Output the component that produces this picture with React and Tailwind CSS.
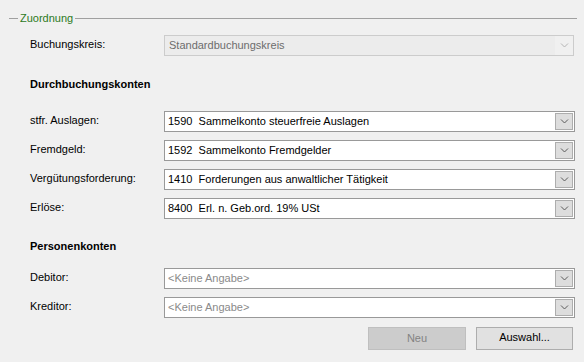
import React from 'react'

const font = { fontFamily: '"Liberation Sans", Arial, sans-serif' }

function Chevron({ color = '#5a5a5a' }) {
  return (
    <svg width="9" height="5" viewBox="0 0 9 5" className="block">
      <path d="M1 0.5 L4.5 4 L8 0.5" fill="none" stroke={color} strokeWidth="1" />
    </svg>
  )
}

function Combo({ text, placeholder, disabled }) {
  if (disabled) {
    return (
      <div className="flex h-[21px] w-[410px] border border-[#cccccc] bg-[#f0f0f0]">
        <div className="flex flex-1 items-center bg-[#ececec] pl-[4px] text-[#6d6d6d]">{text}</div>
        <div className="flex w-[18px] items-center justify-center">
          <Chevron color="#b4b4b4" />
        </div>
      </div>
    )
  }
  return (
    <div className="flex h-[21px] w-[411px] items-center border border-[#999999] bg-white pr-[1px]">
      <div className={`flex-1 whitespace-pre pl-[3px] ${placeholder ? 'text-[#8a8a8a]' : 'text-black'}`}>
        {text}
      </div>
      <div className="flex h-[17px] w-[18px] items-center justify-center border border-[#adadad] bg-[#dddddd]">
        <Chevron />
      </div>
    </div>
  )
}

function Row({ label, children, className = '' }) {
  return (
    <div className={`flex h-[21px] items-center ${className}`}>
      <div className="w-[134px] pb-[2px] pl-[30px] box-content text-black">{label}</div>
      {children}
    </div>
  )
}

export default function App() {
  return (
    <div className="h-[362px] w-[584px] overflow-hidden bg-[#f0f0f0] pt-[12px] text-[11px] leading-[13px]" style={font}>
      <div className="flex h-[13px] items-center pl-[9px] pr-[7px]">
        <div className="h-px w-[9px] bg-[#a0a0a0]" />
        <span className="px-[2px] text-[#2d7a1c]">Zuordnung</span>
        <div className="h-px flex-1 bg-[#a0a0a0]" />
      </div>

      <Row label="Buchungskreis:" className="mt-[10px]">
        <Combo text="Standardbuchungskreis" disabled />
      </Row>

      <div className="mt-[22px] h-[13px] pl-[30px] font-bold text-black">Durchbuchungskonten</div>

      <div className="mt-[20px] flex flex-col gap-[8px]">
        <Row label="stfr. Auslagen:">
          <Combo text="1590  Sammelkonto steuerfreie Auslagen" />
        </Row>
        <Row label="Fremdgeld:">
          <Combo text="1592  Sammelkonto Fremdgelder" />
        </Row>
        <Row label="Vergütungsforderung:">
          <Combo text="1410  Forderungen aus anwaltlicher Tätigkeit" />
        </Row>
        <Row label="Erlöse:">
          <Combo text="8400  Erl. n. Geb.ord. 19% USt" />
        </Row>
      </div>

      <div className="mt-[21px] h-[13px] pl-[30px] font-bold text-black">Personenkonten</div>

      <div className="mt-[15px] flex flex-col gap-[8px]">
        <Row label="Debitor:">
          <Combo text="<Keine Angabe>" placeholder />
        </Row>
        <Row label="Kreditor:">
          <Combo text="<Keine Angabe>" placeholder />
        </Row>
      </div>

      <div className="mt-[9px] flex justify-end gap-[10px] pr-[11px]">
        <button className="h-[23px] w-[98px] border border-[#bfbfbf] bg-[#cccccc] text-[#838383]">Neu</button>
        <button className="h-[23px] w-[97px] border border-[#adadad] bg-[#e1e1e1] pb-[3px] text-black">Auswahl...</button>
      </div>
    </div>
  )
}
